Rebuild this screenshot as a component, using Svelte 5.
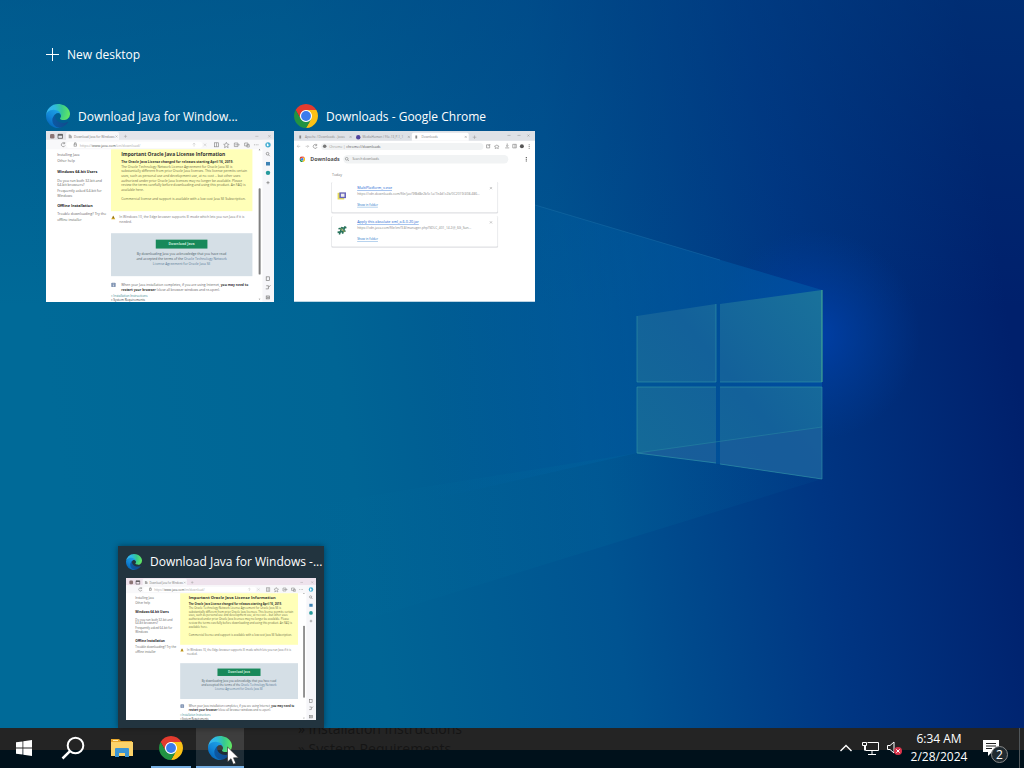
<script>
  const licenseLines = [
    'The Oracle Technology Network License Agreement for Oracle Java SE is',
    'substantially different from prior Oracle Java licenses. This license permits certain',
    'uses, such as personal use and development use, at no cost -- but other uses',
    'authorized under prior Oracle Java licenses may no longer be available. Please',
    'review the terms carefully before downloading and using this product. An FAQ is',
    'available here.',
    '',
    'Commercial license and support is available with a low cost Java SE Subscription.'
  ];

  const sideLinks = [
    { y: 113, text: 'Installing Java' },
    { y: 140, text: 'Other help' },
    { y: 190, text: 'Windows 64-bit Users', bold: true },
    { y: 230, text: 'Do you run both 32-bit and' },
    { y: 249, text: '64-bit browsers?' },
    { y: 275, text: 'Frequently asked 64-bit for' },
    { y: 295, text: 'Windows' },
    { y: 343, text: 'Offline Installation', bold: true },
    { y: 379, text: 'Trouble downloading? Try the' },
    { y: 406, text: 'offline installer' }
  ];

  const downloads = [
    { y: 230, name: 'MultiPlatform_v.exe', url: 'https://cdn.downloads.com/file/jav/9f8d8e2b5c1a/7e4d1c2b/0C2019/408-486...' },
    { y: 384, name: 'Apply this absolute xml_a.6.0.20.jar', url: 'https://cdn.java.com/file/en/9.8/manager.php?SDLC_401_14.2@_6G_Sun...' }
  ];

  let previewOpen = $state(true);
</script>

{#snippet edgeIcon()}
  <svg viewBox="0 0 256 256" aria-hidden="true">
    <defs>
      <linearGradient id="edge-a" x1="60" y1="177" x2="240" y2="177" gradientUnits="userSpaceOnUse">
        <stop offset="0" stop-color="#0c59a4" />
        <stop offset="1" stop-color="#114a8b" />
      </linearGradient>
      <linearGradient id="edge-b" x1="140" y1="100" x2="40" y2="225" gradientUnits="userSpaceOnUse">
        <stop offset="0" stop-color="#1b9de2" />
        <stop offset="0.5" stop-color="#1387d8" />
        <stop offset="1" stop-color="#0669bc" />
      </linearGradient>
      <radialGradient id="edge-c" cx="30" cy="60" r="235" gradientUnits="userSpaceOnUse">
        <stop offset="0" stop-color="#35b4f1" />
        <stop offset="0.3" stop-color="#2fbbdf" />
        <stop offset="0.6" stop-color="#36c990" />
        <stop offset="1" stop-color="#66eb5e" />
      </radialGradient>
    </defs>
    <path fill="url(#edge-a)" d="M231 190.500c-3.400 1.800-6.900 3.400-10.400 4.800a101 101 0 0 1-35.900 6.400c-47.300 0-88.500-32.500-88.500-74.300a31.500 31.500 0 0 1 16.400-27.600c-42.800 1.800-53.800 46.400-53.800 72.500 0 73.900 68.100 81.400 82.800 81.400 7.900 0 19.800-2.300 27-4.600l1.300-.4a128 128 0 0 0 66.600-52.800 4 4 0 0 0-5.500-5.400z" />
    <path fill="url(#edge-b)" d="M105.700 241.400a79 79 0 0 1-22.700-21.300 80.700 80.700 0 0 1 29.500-120.300c3.100-1.500 8.500-4.100 15.500-4a32.400 32.400 0 0 1 25.700 13 31.900 31.900 0 0 1 6.400 18.700c0-.2 24.500-79.600-80-79.600-43.900 0-80 41.700-80 78.200a130 130 0 0 0 12.100 56 128 128 0 0 0 156.400 67.100 75.600 75.600 0 0 1-62.900-7.800z" />
    <path fill="url(#edge-c)" d="M152.300 148.900c-.8 1-3.300 2.500-3.300 5.600 0 2.600 1.700 5.100 4.700 7.200 14.400 10 41.500 8.700 41.600 8.700a59.600 59.600 0 0 0 30.300-8.300 61.400 61.400 0 0 0 30.400-52.900c.3-22.400-8-37.300-11.300-43.900C223.500 23.800 177.700 0 128 0A128 128 0 0 0 0 126.200c.5-36.500 36.800-66 80-66 3.500 0 23.500.3 42 10 16.300 8.600 24.900 18.900 30.900 29.200 6.200 10.700 7.300 24.200 7.300 29.500s-2.800 13.400-7.900 20z" />
  </svg>
{/snippet}

{#snippet chromeIcon()}
  <svg viewBox="2 2 44 44" aria-hidden="true">
    <circle cx="24" cy="24" r="12" fill="#fff" />
    <path fill="#e33b2e" d="M24 13h19.050A22 22 0 0 0 4.950 13l9.520 16.500A11 11 0 0 1 24 13z" />
    <path fill="#fbc116" d="M43.050 13A22 22 0 0 1 24 46l9.530-16.500A11 11 0 0 0 24 13z" />
    <path fill="#229342" d="M4.950 13A22 22 0 0 0 24 46l9.530-16.500a11 11 0 0 1-19.060 0z" />
    <circle cx="24" cy="24" r="9" fill="#3b7cec" />
  </svg>
{/snippet}

{#snippet javaPage(tabColor)}
  <svg class="shot" viewBox="0 0 1024 768" role="img" aria-label="Download Java for Windows">
    <rect width="1024" height="768" fill="#fff" />
    <rect width="1024" height="40" fill={tabColor} />
    <path d="M90 40V12q0-8 8-8h222q8 0 8 8v28z" fill="#f8f8fa" />
    <rect y="40" width="1024" height="42" fill="#f8f8fa" />
    <rect x="92" y="48" width="610" height="28" rx="12" fill="#fff" />
    <rect x="972" y="40" width="52" height="728" fill="#f6f6f9" />
    <rect x="18" y="14" width="20" height="20" rx="6" fill="#8a7474" />
    <path d="M54 15h20v18H54z" fill="none" stroke="#444" stroke-width="3" />
    <path d="M54 18h20" stroke="#444" stroke-width="5" />
    <path d="M108 16h-6v17h14V22z" fill="#aaa" />
    <text x="126" y="31" font-size="14" fill="#777">Download Java for Windows</text>
    <path d="M312 20l9 9m0-9l-9 9M350 24h14m-7-7v14M940 24h14M998 18l11 11m0-11l-11 11" stroke="#999" stroke-width="2" />
    <g fill="none" stroke="#888" stroke-width="3">
      <path d="M84 55a9 9 0 1 0 2 10M84 50v7h-8" />
      <rect x="126" y="59" width="11" height="9" />
      <path d="M128 59v-6h7v6" />
      <path d="M665 56v14m-6-10l6-6 6 6M708 57l12 10m0-10l-12 10" stroke="#ccc" />
      <rect x="757" y="53" width="18" height="18" />
      <path d="M766 53v18M810 51l4 8 8 1-6 6 2 9-8-5-8 5 2-9-6-6 8-1z" />
      <path d="M846 54h16v16h-16zM850 62h20M892 54h15v13h-15zM902 61h11v11h-11z" />
      <path d="M934 62h20" stroke-dasharray="4 4" />
    </g>
    <circle cx="997" cy="62" r="12" fill="#45aed2" />
    <path d="M992 54v16l10-6z" fill="#fff" />
    <text x="152" y="70" font-size="16" fill="#aaa">https://<tspan fill="#555">www.java.com</tspan>/en/download/</text>

    {#each sideLinks as link}
      <text x="50" y={link.y} font-size={link.bold ? 17 : 16} font-weight={link.bold ? 700 : 400} fill={link.bold ? '#222' : '#666'}>{link.text}</text>
    {/each}

    <rect x="292" y="82" width="635" height="278" fill="#ffffb8" />
    <text x="338" y="113" font-size="22" font-weight="700" fill="#333">Important Oracle Java License Information</text>
    <text x="338" y="143" font-size="15" font-weight="700" fill="#333">The Oracle Java License changed for releases starting April 16, 2019.</text>
    {#each licenseLines as line, i}
      <text x="338" y={165 + i * 21} font-size="15" fill="#6f6f48">{line}</text>
    {/each}

    <path d="M302 379l9 17h-18z" fill="#d0a21c" />
    <path d="M302 384v7" stroke="#333" stroke-width="3" />
    <text x="329" y="392" font-size="15" fill="#777">In Windows 10, the Edge browser supports IE mode which lets you run Java if it is</text>
    <text x="329" y="414" font-size="15" fill="#777">needed.</text>

    <rect x="292" y="459" width="635" height="193" fill="#d5dfe6" />
    <rect x="493" y="488" width="232" height="40" fill="#18895a" />
    <text x="609" y="514" font-size="16" font-weight="700" fill="#c4ead8" text-anchor="middle">Download Java</text>
    <g font-size="15" fill="#4d5c68" text-anchor="middle">
      <text x="609" y="558">By downloading Java you acknowledge that you have read</text>
      <text x="609" y="580">and accepted the terms of the <tspan fill="#5b7c99">Oracle Technology Network</tspan></text>
      <text x="609" y="602" fill="#5b7c99">License Agreement for Oracle Java SE</text>
    </g>

    <rect x="293" y="681" width="20" height="20" rx="4" fill="#8497b5" />
    <path d="M303 686v3m0 3v6" stroke="#fff" stroke-width="3" />
    <text x="338" y="696" font-size="15" fill="#666">When your Java installation completes, if you are using Internet, <tspan font-weight="700" fill="#333">you may need to</tspan></text>
    <text x="338" y="717" font-size="15" fill="#666"><tspan font-weight="700" fill="#333">restart your browser</tspan> (close all browser windows and re-open).</text>
    <text x="292" y="746" font-size="14" fill="#3c8a91">» Installation Instructions</text>
    <text x="292" y="764" font-size="14" fill="#444">» System Requirements</text>

    <rect x="955" y="257" width="9" height="388" rx="4" fill="#808080" />
    <path d="M955 86l4-5 4 5zM955 753l4 5 4-5z" fill="#777" />
    <g fill="none" stroke="#777" stroke-width="3">
      <circle cx="995" cy="102" r="6" />
      <path d="M999 107l6 6M990 232h14M997 225v14" />
      <rect x="989" y="655" width="14" height="16" />
      <path d="M989 695h10v14h-12M1000 702l8-9" />
      <rect x="989" y="741" width="15" height="13" />
      <circle cx="997" cy="748" r="3" />
    </g>
    <path d="M988 139h18v16h-18z" fill="#3e83b4" />
    <circle cx="997" cy="188" r="10" fill="#279a9c" />
  </svg>
{/snippet}

{#snippet downloadsPage()}
  <svg class="shot" viewBox="0 0 1084 768" role="img" aria-label="Downloads">
    <rect width="1084" height="768" fill="#fff" />
    <rect width="1084" height="44" fill="#dee1e6" />
    <path d="M530 44V16q0-8 8-8h240q8 0 8 8v28z" fill="#fff" />
    <g font-size="14" fill="#888">
      <text x="50" y="33">Apache / Downloads - Javas</text>
      <text x="308" y="33">MediaHuman / File.13_P.1_1</text>
      <text x="574" y="33">Downloads</text>
    </g>
    <path d="M24 20h8v14h-8zM546 20h8v14h-8z" fill="#888" />
    <circle cx="289" cy="28" r="10" fill="#51459c" />
    <path d="M250 22l9 9m0-9l-9 9M512 22l9 9m0-9l-9 9M768 22l9 9m0-9l-9 9M804 28h16m-8-8v16M960 20h14M1005 20h14M1050 16l9 9m0-9l-9 9" stroke="#888" stroke-width="2" />
    <rect x="122" y="54" width="730" height="32" rx="16" fill="#f1f3f4" />
    <g fill="none" stroke="#888" stroke-width="3">
      <path d="M28 69H14m6-6l-6 6 6 6M52 69h14m-6-6l6 6-6 6" stroke="#bbb" />
      <path d="M102 63a9 9 0 1 0 2 9M102 58v8h-8" />
      <path d="M866 62h14v14h-14zM874 68l9-9" />
      <path d="M912 62l4 5 6 1-4 5 1 6-7-3-7 3 1-6-4-5 6-1zM950 76h18M959 56v14m-5-5l5 5 5-5M984 60h16v16h-16zM994 60v16" />
    </g>
    <circle cx="138" cy="69" r="8" fill="#777" />
    <circle cx="1025" cy="69" r="9" fill="#555" />
    <path d="M1058 60v20" stroke="#666" stroke-width="4" stroke-dasharray="4 4" />
    <text x="158" y="75" font-size="16" fill="#999">Chrome | <tspan fill="#555">chrome://downloads</tspan></text>

    <svg x="24" y="114" width="26" height="26">{@render chromeIcon()}</svg>
    <text x="73" y="136" font-size="24" font-weight="700" fill="#555">Downloads</text>
    <rect x="222" y="108" width="742" height="38" rx="19" fill="#f1f3f4" />
    <circle cx="237" cy="125" r="6" fill="none" stroke="#888" stroke-width="3" />
    <path d="M241 129l6 6" stroke="#888" stroke-width="3" />
    <text x="263" y="132" font-size="14" fill="#777">Search downloads</text>
    <path d="M1045 117v20" stroke="#555" stroke-width="5" stroke-dasharray="4 4" />
    <text x="171" y="204" font-size="16" fill="#777">Today</text>

    {#each downloads as item, i}
      <rect x="168" y={item.y - 1} width="750" height="142" rx="6" fill="#dfe0e3" />
      <rect x="171" y={item.y - 2} width="744" height="138" rx="6" fill="#fff" />
      <text x="284" y={item.y + 32} font-size="17" fill="#1a66d2" text-decoration="underline">{item.name}</text>
      <text x="284" y={item.y + 58} font-size="15" fill="#888">{item.url}</text>
      <text x="284" y={item.y + 107} font-size="14" fill="#1a73c8" text-decoration="underline">Show in folder</text>
      <path d="M881 {item.y + 22}l10 10m0-10l-10 10" stroke="#888" stroke-width="2" />
      {#if i === 0}
        <path d="M196 278h30v30h-30z" fill="#e5da58" />
        <path d="M204 276h30v26h-30z" fill="#6866bc" />
        <path d="M211 282h16v14h-16z" fill="#eee" />
      {:else}
        <path d="M216 432l-12 34M230 428l-12 34M200 440l36-6M196 456l36-6" stroke="#28735c" stroke-width="7" />
        <path d="M210 438l18 16" stroke="#8b9a54" stroke-width="5" />
      {/if}
    {/each}
  </svg>
{/snippet}

<div class="desktop">
  <svg class="wallpaper" viewBox="0 0 1024 768" preserveAspectRatio="none" aria-hidden="true">
    <defs>
      <linearGradient id="base" gradientUnits="userSpaceOnUse" x1="60" y1="470" x2="1010" y2="330">
        <stop offset="0" stop-color="#006a98" />
        <stop offset="0.3" stop-color="#006595" />
        <stop offset="0.55" stop-color="#005391" />
        <stop offset="0.78" stop-color="#003582" />
        <stop offset="1" stop-color="#00206c" />
      </linearGradient>
      <linearGradient id="shade" x1="0" y1="0" x2="0" y2="1">
        <stop offset="0" stop-color="#00427f" stop-opacity="0.4" />
        <stop offset="0.4" stop-color="#00427f" stop-opacity="0" />
      </linearGradient>
      <radialGradient id="glow" gradientUnits="userSpaceOnUse" cx="815" cy="335" r="105">
        <stop offset="0" stop-color="#0042b0" stop-opacity="0.8" />
        <stop offset="1" stop-color="#0040a0" stop-opacity="0" />
      </radialGradient>
      <linearGradient id="beam" gradientUnits="userSpaceOnUse" x1="430" y1="0" x2="822" y2="0">
        <stop offset="0" stop-color="#0064a8" stop-opacity="0" />
        <stop offset="0.5" stop-color="#0062a6" stop-opacity="0.4" />
        <stop offset="1" stop-color="#0054a4" stop-opacity="0.7" />
      </linearGradient>
      <linearGradient id="low-beam" gradientUnits="userSpaceOnUse" x1="300" y1="0" x2="822" y2="0">
        <stop offset="0" stop-color="#0072a0" stop-opacity="0" />
        <stop offset="0.6" stop-color="#0070a0" stop-opacity="0.2" />
        <stop offset="1" stop-color="#0060a0" stop-opacity="0.1" />
      </linearGradient>
      <linearGradient id="pane" gradientUnits="userSpaceOnUse" x1="637" y1="453" x2="822" y2="300">
        <stop offset="0" stop-color="#146a98" />
        <stop offset="0.5" stop-color="#13619a" />
        <stop offset="1" stop-color="#19719b" />
      </linearGradient>
    </defs>
    <rect width="1024" height="768" fill="url(#base)" />
    <rect width="1024" height="768" fill="url(#shade)" />
    <rect width="1024" height="768" fill="url(#glow)" />
    <path d="M822 290L430 174V500L637 453L822 478z" fill="url(#beam)" />
    <path d="M637 453L300 507V640L822 479z" fill="url(#low-beam)" />
    <path d="M535 205L720 260" stroke="#2a80b4" opacity="0.3" />
    <path d="M637 316l79-12v78h-79zM720 304l102-14v92H720zM637 387h79v76l-79-10zM720 387h102v92l-102-15z" fill="url(#pane)" />
    <path d="M637 453l79-11v21zM720 441l102-14v52l-102-15z" fill="#1a5a9a" opacity="0.7" />
    <path d="M637 453l185-26" stroke="#2a8ca4" opacity="0.5" />
    <path d="M637 382v-66M637 387v66l79 10M822 387v92l-102-15M637 382h79M720 382h102M637 387h79M720 387h102M716 304v78" fill="none" stroke="#3397a8" opacity="0.6" />
    <path d="M822 290v92" stroke="#4bb391" />
  </svg>

  <main class="task-view">
    <button class="new-desktop">
      <svg viewBox="0 0 13 13" aria-hidden="true"><path d="M6.500 0v13M0 6.500h13" stroke="#fff" /></svg>
      New desktop
    </button>

    <div class="windows">
      <button class="window java">
        <span class="window-title">{@render edgeIcon()}<span>Download Java for Window...</span></span>
        {@render javaPage('#e4e5ea')}
      </button>
      <button class="window downloads">
        <span class="window-title">{@render chromeIcon()}<span>Downloads - Google Chrome</span></span>
        {@render downloadsPage()}
      </button>
    </div>
  </main>

  <footer class="taskbar">
    <div class="ghost" aria-hidden="true">
      <span>» Installation Instructions</span>
      <span>» System Requirements</span>
    </div>

    <nav class="apps" aria-label="Taskbar">
      <button class="app" aria-label="Start">
        <svg width="16" height="16" viewBox="0 0 16 16"><path fill="#fff" d="M0 2.300L6.500 1.400v6.200H0zM7.300 1.300L16 0v7.600H7.300zM0 8.400h6.500v6.200L0 13.700zM7.300 8.400H16V16l-8.700-1.300z" /></svg>
      </button>
      <button class="app" aria-label="Search">
        <svg width="24" height="24" viewBox="0 0 24 24" fill="none" stroke="#fff" stroke-width="2"><circle cx="14.500" cy="9.500" r="7.800" /><path d="M9 15.200L1.500 22.500" stroke-width="2.500" /></svg>
      </button>
      <button class="app" aria-label="File Explorer">
        <svg width="22" height="20" viewBox="0 0 22 20">
          <path d="M0 1h8l2 2h11v4H0z" fill="#e8a92e" />
          <path d="M0 4h22v14H0z" fill="#fbd36a" />
          <path d="M2 2h5v1H2z" fill="#fff0b8" />
          <path d="M4 19v-8q0-1 1-1h12q1 0 1 1v8h-4v-4H8v4z" fill="#3b95d4" />
        </svg>
      </button>
      <button class="app running" aria-label="Google Chrome">{@render chromeIcon()}</button>
      <div class="app-slot">
        <button class="app active" aria-label="Microsoft Edge" aria-expanded={previewOpen} onclick={() => (previewOpen = !previewOpen)}>
          {@render edgeIcon()}
        </button>
        {#if previewOpen}
          <div class="preview">
            <div class="preview-title">{@render edgeIcon()}<span>Download Java for Windows -...</span></div>
            {@render javaPage('#eee2ec')}
          </div>
        {/if}
        <svg class="cursor" viewBox="0 0 12 19" aria-hidden="true">
          <path d="M.5 1v15l3.500-3.300 2.300 5.500 2.500-1-2.300-5.400h5z" fill="#fff" stroke="#222" stroke-width=".6" />
        </svg>
      </div>
    </nav>

    <div class="tray">
      <button class="tray-icon" aria-label="Show hidden icons">
        <svg width="12" height="8" viewBox="0 0 12 8"><path d="M.5 7L6 1.500 11.500 7" fill="none" stroke="#fff" stroke-width="1.400" /></svg>
      </button>
      <button class="tray-icon" aria-label="Network">
        <svg width="17" height="14" viewBox="0 0 17 14" fill="none" stroke="#fff"><path d="M5.500 1.500h11v8H3.500V5M10 9.500v3.500M6 13.500h8M.5 1.500h4v3h-4zM2.500 4.500v5" /></svg>
      </button>
      <button class="tray-icon" aria-label="Volume muted">
        <svg width="17" height="16" viewBox="0 0 17 16"><path d="M1.500 5.500h2.500L8 2v11L4 9.500H1.500z" fill="none" stroke="#fff" /><circle cx="12" cy="11" r="4" fill="#d9344b" /><path d="M10.300 9.300l3.400 3.400m0-3.400l-3.400 3.400" stroke="#fff" /></svg>
      </button>
      <button class="clock"><span>6:34 AM</span><span>2/28/2024</span></button>
      <button class="notifications" aria-label="Notifications, 2 new">
        <svg width="16" height="16" viewBox="0 0 16 16"><path d="M0 0h16v12H9l-4 4v-4H0z" fill="#fff" /><path d="M3 3.500h10M3 6h10M3 8.500h6" stroke="#222" /></svg>
        <span class="badge">2</span>
      </button>
      <button class="show-desktop" aria-label="Show desktop"></button>
    </div>
  </footer>
</div>

<style>
  :global(body) {
    margin: 0;
  }

  .desktop {
    position: relative;
    display: flex;
    flex-direction: column;
    min-height: 100vh;
    overflow: hidden;
    background: #005a94;
    color: #fff;
    font-family: "Open Sans", "Noto Sans", sans-serif;
    font-size: 12px;
  }

  button {
    border: none;
    padding: 0;
    background: none;
    color: inherit;
    font: inherit;
    text-align: left;
  }

  svg {
    display: block;
    flex-shrink: 0;
  }

  .wallpaper {
    position: absolute;
    inset: 0;
    width: 100%;
    height: 100%;
  }

  .task-view {
    position: relative;
    flex: 1;
    padding: 43px 46px;
  }

  .new-desktop {
    display: flex;
    align-items: center;
    gap: 8px;
    height: 22px;
  }

  .new-desktop svg {
    width: 13px;
    height: 13px;
  }

  .windows {
    display: flex;
    flex-wrap: wrap;
    align-items: flex-start;
    gap: 20px;
    margin-top: 38px;
  }

  .window.java {
    width: 228px;
  }

  .window.downloads {
    width: 241px;
  }

  .window-title {
    display: flex;
    align-items: center;
    gap: 8px;
    height: 26px;
    padding-bottom: 2px;
    white-space: nowrap;
  }

  .window-title svg {
    width: 24px;
    height: 24px;
  }

  .shot {
    width: 100%;
    height: auto;
  }

  .taskbar {
    position: relative;
    display: flex;
    justify-content: space-between;
    height: 40px;
    background: linear-gradient(#242424 22px, #00111b 22px);
  }

  /* page text showing faintly through the bar */
  .ghost {
    position: absolute;
    top: -9px;
    left: 298px;
    display: flex;
    flex-direction: column;
    height: 31px;
    overflow: hidden;
    color: #151515;
    font-size: 14px;
    line-height: 20px;
    clip-path: inset(9px 0 0 0);
  }

  .apps {
    position: relative;
    display: flex;
    gap: 1px;
  }

  .app {
    display: flex;
    align-items: center;
    justify-content: center;
    box-sizing: border-box;
    width: 48px;
    height: 40px;
  }

  .running,
  .active {
    position: relative;
  }

  .running svg,
  .active svg {
    width: 24px;
    height: 24px;
  }

  .running::after,
  .active::after {
    content: "";
    position: absolute;
    right: 4px;
    bottom: 0;
    left: 4px;
    height: 2px;
    background: #76aee2;
  }

  .active {
    background: rgba(255, 255, 255, 0.12);
  }

  .active::after {
    right: 0;
    left: 0;
  }

  .app-slot {
    position: relative;
  }

  .preview {
    position: absolute;
    bottom: 100%;
    left: 50%;
    box-sizing: border-box;
    width: 206px;
    margin-left: -102px;
    padding: 0 8px 8px;
    background: #22343f;
    box-shadow: 0 0 6px rgba(0, 0, 0, 0.4);
  }

  .preview-title {
    display: flex;
    align-items: center;
    gap: 8px;
    height: 32px;
    white-space: nowrap;
  }

  .preview-title svg {
    width: 16px;
    height: 16px;
  }

  .cursor {
    position: absolute;
    top: 18px;
    left: 31px;
    width: 12px;
    height: 19px;
  }

  .tray {
    position: relative;
    display: flex;
    align-items: center;
  }

  .tray-icon {
    display: flex;
    align-items: center;
    justify-content: center;
    width: 24px;
    height: 40px;
  }

  .clock {
    display: flex;
    flex-direction: column;
    align-items: center;
    width: 66px;
    line-height: 18px;
  }

  .notifications {
    position: relative;
    display: flex;
    align-items: center;
    justify-content: center;
    width: 44px;
    height: 40px;
    margin-right: 3px;
  }

  .notifications svg {
    margin-right: 6px;
  }

  .badge {
    position: absolute;
    top: 18px;
    left: 19px;
    width: 15px;
    height: 15px;
    border: 1px solid #888;
    border-radius: 50%;
    background: #202a30;
    line-height: 15px;
    text-align: center;
  }

  .show-desktop {
    width: 5px;
    height: 40px;
    border-left: 1px solid #50565a;
  }
</style>
